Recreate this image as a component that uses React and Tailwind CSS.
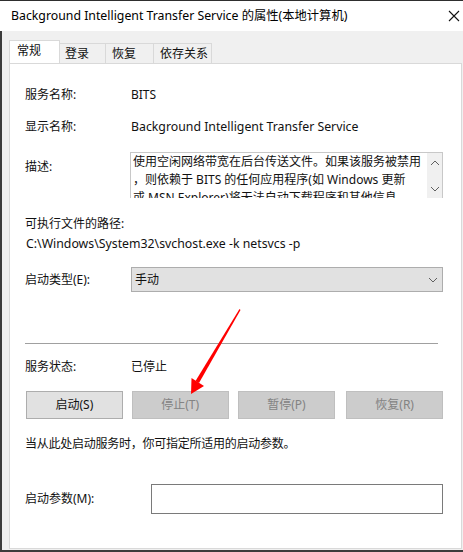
import React from "react";

const font = {
  fontFamily: '"Segoe UI", "Noto Sans", "Noto Sans CJK SC", sans-serif',
};

function Row({ label, children, className = "" }) {
  return (
    <div className={`flex items-center ${className}`}>
      <div className="w-[106px] shrink-0">{label}</div>
      {children}
    </div>
  );
}

function Chevron({ dir = "down", className = "" }) {
  return (
    <svg width="10" height="6" viewBox="0 0 10 6" className={className}>
      <polyline
        points={dir === "down" ? "1,1 5,5 9,1" : "1,5 5,1 9,5"}
        fill="none"
        stroke="#606060"
        strokeWidth="1"
      />
    </svg>
  );
}

export default function App() {
  const buttons = [
    { t: "启动(S)", on: true, w: "w-[97px]" },
    { t: "停止(T)", on: false, w: "w-[97px]" },
    { t: "暂停(P)", on: false, w: "w-[98px]" },
    { t: "恢复(R)", on: false, w: "w-[97px]" },
  ];

  return (
    <div
      className="relative w-[463px] h-[552px] overflow-hidden bg-[#f0f0f0] text-[12px] text-[#111]"
      style={font}
    >
      {/* title bar */}
      <div className="h-[31px] bg-white border-t border-[#2e2e2e] flex items-center justify-between pl-[11px] pr-[3px] text-[12.3px] text-black">
        <span>Background Intelligent Transfer Service 的属性(本地计算机)</span>
        <svg width="12" height="12" viewBox="0 0 12 12">
          <path d="M1 1L11 11M11 1L1 11" stroke="#111" strokeWidth="1.1" />
        </svg>
      </div>

      {/* body */}
      <div className="h-[521px] border-l-2 border-[#3c3c3c] pl-[7px] pr-[1px] pt-[10px] flex flex-col">
        {/* tabs */}
        <div className="flex items-end h-[22px] relative z-10">
          <div className="w-[51px] h-[23px] bg-white border border-b-0 border-[#d9d9d9] pl-[7px] pt-[1px]">
            常规
          </div>
          <div className="w-[46px] h-[20px] border border-l-0 border-b-0 border-[#d9d9d9] pl-[5px] leading-[20px]">
            登录
          </div>
          <div className="w-[48px] h-[20px] border border-l-0 border-b-0 border-[#d9d9d9] pl-[6px] leading-[20px]">
            恢复
          </div>
          <div className="w-[58px] h-[20px] border border-l-0 border-b-0 border-[#d9d9d9] pl-[6px] leading-[20px]">
            依存关系
          </div>
        </div>

        {/* panel */}
        <div className="flex-1 bg-white border border-[#d9d9d9] pl-[15px] pr-[18px] flex flex-col mb-[3px]">
          <Row label="服务名称:" className="h-[18px] mt-[22px]">
            <span>BITS</span>
          </Row>
          <Row label="显示名称:" className="h-[18px] mt-[14px]">
            <span className="text-[12.3px]">Background Intelligent Transfer Service</span>
          </Row>

          <div className="flex mt-[16px] h-[46px]">
            <div className="w-[105px] shrink-0 pt-[6px]">描述:</div>
            <div className="flex-1 border border-b-0 border-[#c8c8c8] flex overflow-hidden">
              <div className="flex-1 pl-[2px] leading-[18px] whitespace-nowrap overflow-hidden">
                <div>使用空闲网络带宽在后台传送文件。如果该服务被禁用</div>
                <div>，则依赖于 BITS 的任何应用程序(如 Windows 更新</div>
                <div>或 MSN Explorer)将无法自动下载程序和其他信息</div>
              </div>
              <div className="w-[15px] bg-[#f0f0f0] flex flex-col items-center justify-between pt-[7px] pb-[6px]">
                <Chevron dir="up" />
                <Chevron dir="down" />
              </div>
            </div>
          </div>

          <div className="h-[18px] mt-[17px] flex items-center">可执行文件的路径:</div>
          <div className="h-[18px] mt-[2px] flex items-center pl-[1px] text-[12.3px]">
            C:\Windows\System32\svchost.exe -k netsvcs -p
          </div>

          <Row label="启动类型(E):" className="h-[25px] mt-[14px]">
            <div className="flex-1 h-[25px] bg-[#e1e1e1] border border-[#adadad] flex items-center justify-between pl-[3px] pr-[4px]">
              <span>手动</span>
              <Chevron dir="down" />
            </div>
          </Row>

          <div className="h-px bg-[#a0a0a0] mt-[51px] mr-[5px]" />

          <Row label="服务状态:" className="h-[18px] mt-[14px]">
            <span>已停止</span>
          </Row>

          <div className="flex mt-[15px] h-[28px] pl-[1px]">
            {buttons.map((b, i) => (
              <div
                key={i}
                className={`${b.w} h-[28px] flex items-center justify-center border ${
                  i === 0 ? "" : i === 3 ? "ml-[11px]" : "ml-[9px]"
                } ${
                  b.on
                    ? "bg-[#e1e1e1] border-[#adadad] text-[#111]"
                    : "bg-[#cccccc] border-[#bfbfbf] text-[#838383]"
                }`}
              >
                {b.t}
              </div>
            ))}
          </div>

          <div className="h-[18px] mt-[16px] flex items-center tracking-[-0.25px]">
            当从此处启动服务时，你可指定所适用的启动参数。
          </div>

          <div className="flex items-center mt-[31px] h-[30px]">
            <div className="w-[126px] shrink-0">启动参数(M):</div>
            <div className="flex-1 h-[30px] border border-[#7a7a7a] bg-white" />
          </div>
        </div>
      </div>
      <div className="absolute left-0 right-0 bottom-0 h-[2px] bg-[#3c3c3c]" />

      {/* red annotation arrow */}
      <svg
        className="absolute left-0 top-0 pointer-events-none"
        width="463"
        height="552"
        viewBox="0 0 463 552"
      >
        <polygon points="239.5,309 240.5,310 199,383 195.5,381" fill="#ff0000" />
        <polygon points="191,394 191.5,378 204,386" fill="#ff0000" />
      </svg>
    </div>
  );
}
